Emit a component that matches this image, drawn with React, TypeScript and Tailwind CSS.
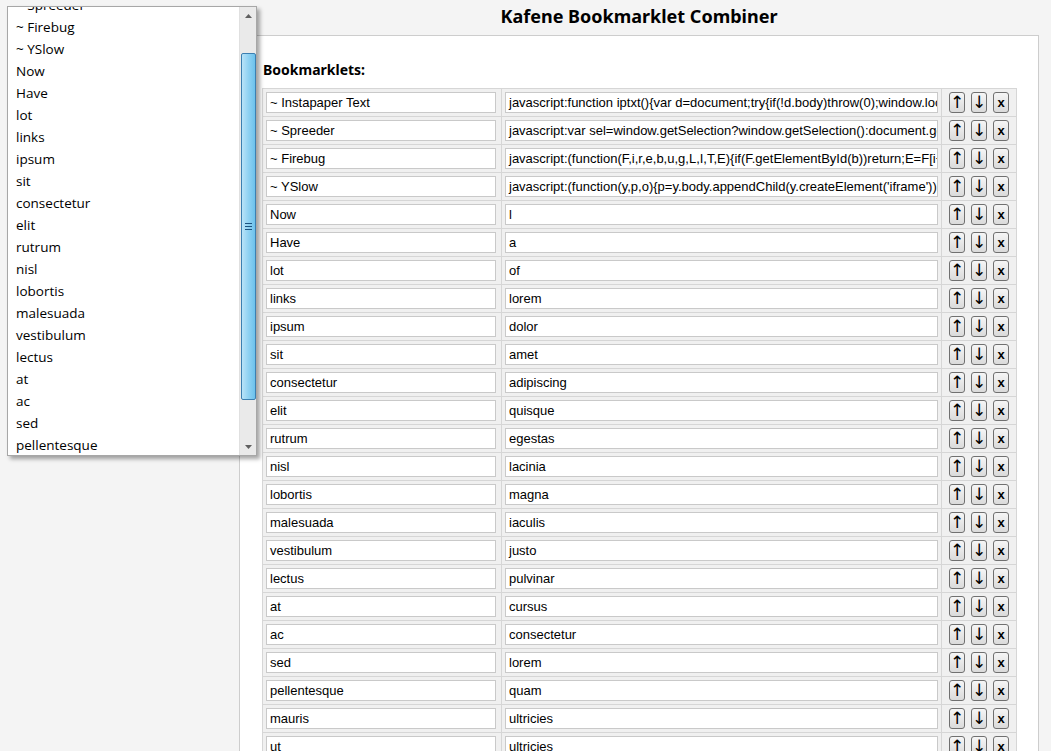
import React from "react";

const rows: [string, string][] = [
  ["~ Instapaper Text", "javascript:function iptxt(){var d=document;try{if(!d.body)throw(0);window.location='http://www.instapaper.com/text?u='+encodeURIComponent(d.location.href);}catch(e){alert('Please wait until the page has loaded.');}}iptxt();void(0)"],
  ["~ Spreeder", "javascript:var sel=window.getSelection?window.getSelection():document.getSelection?document.getSelection():document.selection.createRange().text;"],
  ["~ Firebug", "javascript:(function(F,i,r,e,b,u,g,L,I,T,E){if(F.getElementById(b))return;E=F[i+'NS']&&F.documentElement.namespaceURI;"],
  ["~ YSlow", "javascript:(function(y,p,o){p=y.body.appendChild(y.createElement('iframe'));p.id='YSLOW-bookmarklet';"],
  ["Now", "l"],
  ["Have", "a"],
  ["lot", "of"],
  ["links", "lorem"],
  ["ipsum", "dolor"],
  ["sit", "amet"],
  ["consectetur", "adipiscing"],
  ["elit", "quisque"],
  ["rutrum", "egestas"],
  ["nisl", "lacinia"],
  ["lobortis", "magna"],
  ["malesuada", "iaculis"],
  ["vestibulum", "justo"],
  ["lectus", "pulvinar"],
  ["at", "cursus"],
  ["ac", "consectetur"],
  ["sed", "lorem"],
  ["pellentesque", "quam"],
  ["mauris", "ultricies"],
  ["ut", "ultricies"],
];

const listItems = [
  "~ Spreeder",
  "~ Firebug",
  "~ YSlow",
  "Now",
  "Have",
  "lot",
  "links",
  "ipsum",
  "sit",
  "consectetur",
  "elit",
  "rutrum",
  "nisl",
  "lobortis",
  "malesuada",
  "vestibulum",
  "lectus",
  "at",
  "ac",
  "sed",
  "pellentesque",
  "mauris",
];

function Btn({ children }: { children: React.ReactNode }) {
  return (
    <div className="w-[16px] h-[21px] shrink-0 overflow-hidden flex items-center justify-center rounded-[3px] border border-[#707070] bg-gradient-to-b from-[#f6f6f6] to-[#dadada] text-black">
      {children}
    </div>
  );
}

export default function App() {
  return (
    <div className="relative w-[1051px] h-[751px] overflow-hidden bg-[#f4f4f4] flex items-start">
      {/* left sidebar */}
      <div className="w-[239px] shrink-0" />
      {/* main */}
      <div className="w-[800px] shrink-0 flex flex-col">
        <div className="h-[35px] shrink-0 flex items-center justify-center pb-[4px]">
          <h1 className="text-[18px] font-bold text-black [font-family:'Noto_Sans',sans-serif] leading-[22px]">
            Kafene Bookmarklet Combiner
          </h1>
        </div>
        <div className="shrink-0 bg-white border border-[#cdcdcd] pl-[22px] pt-[24px] pb-[20px]">
          <h2 className="text-[14px] font-bold text-black [font-family:'Noto_Sans',sans-serif] leading-[20px] h-[28px] pl-[1px]">
            Bookmarklets:
          </h2>
          <div className="border-l border-t border-[#d6d6d6] w-[755px] bg-[#f0f0f0]">
            {rows.map(([n, v], i) => (
              <div key={i} className="flex border-b border-[#d6d6d6] h-[28px]">
                <div className="w-[239px] border-r border-[#d6d6d6] pl-[3px] pt-[3px]">
                  <div className="w-[230px] h-[21px] bg-white border border-[#c9c9c9] px-[3px] text-[13px] leading-[19px] text-black [font-family:'Liberation_Sans',Arial,sans-serif] whitespace-nowrap overflow-hidden">
                    {n}
                  </div>
                </div>
                <div className="w-[440px] border-r border-[#d6d6d6] pl-[3px] pt-[3px]">
                  <div className="w-[433px] h-[21px] bg-white border border-[#c9c9c9] px-[3px] text-[13px] leading-[19px] text-black [font-family:'Liberation_Sans',Arial,sans-serif] whitespace-nowrap overflow-hidden">
                    {v}
                  </div>
                </div>
                <div className="w-[75px] border-r border-[#d6d6d6] pl-[7px] pt-[3px] flex gap-[6px]">
                  <Btn>
                    <span className="text-[17px] leading-[17px] [font-family:'DejaVu_Sans',sans-serif]">↑</span>
                  </Btn>
                  <Btn>
                    <span className="text-[17px] leading-[17px] [font-family:'DejaVu_Sans',sans-serif]">↓</span>
                  </Btn>
                  <Btn>
                    <span className="text-[13px] leading-[13px] font-bold [font-family:'Liberation_Sans',Arial,sans-serif]">x</span>
                  </Btn>
                </div>
              </div>
            ))}
          </div>
        </div>
      </div>

      {/* dropdown list popup */}
      <div className="absolute left-[7px] top-[6px] w-[250px] h-[450px] bg-white border border-[#a7a7a7] shadow-[3px_3px_4px_rgba(0,0,0,0.35)] flex">
        <div className="flex-1 overflow-hidden">
          <div className="-mt-[13px]">
            {listItems.map((t, i) => (
              <div key={i} className="h-[22px] pl-[8px] text-[13.5px] leading-[22px] text-black [font-family:'Open_Sans',sans-serif] whitespace-nowrap">
                {t}
              </div>
            ))}
          </div>
        </div>
        <div className="w-[17px] bg-[#eaeaea] border-l border-[#e0e0e0] flex flex-col items-center">
          <div className="h-[17px] w-full flex items-center justify-center">
            <svg width="7" height="4" viewBox="0 0 7 4"><path d="M0 4 L3.5 0 L7 4 Z" fill="#606060" /></svg>
          </div>
          <div className="h-[29px]" />
          <div className="w-[15px] h-[347px] rounded-[2px] border border-[#3c7fb1] bg-gradient-to-r from-[#b9e3f8] via-[#8fd1f2] to-[#6cc2ec] flex items-center justify-center">
            <svg width="7" height="7" viewBox="0 0 7 7">
              <rect x="0" y="0" width="7" height="1" fill="#1c5380" />
              <rect x="0" y="3" width="7" height="1" fill="#1c5380" />
              <rect x="0" y="6" width="7" height="1" fill="#1c5380" />
            </svg>
          </div>
          <div className="flex-1" />
          <div className="h-[17px] w-full flex items-center justify-center">
            <svg width="7" height="4" viewBox="0 0 7 4"><path d="M0 0 L3.5 4 L7 0 Z" fill="#606060" /></svg>
          </div>
        </div>
      </div>
    </div>
  );
}
